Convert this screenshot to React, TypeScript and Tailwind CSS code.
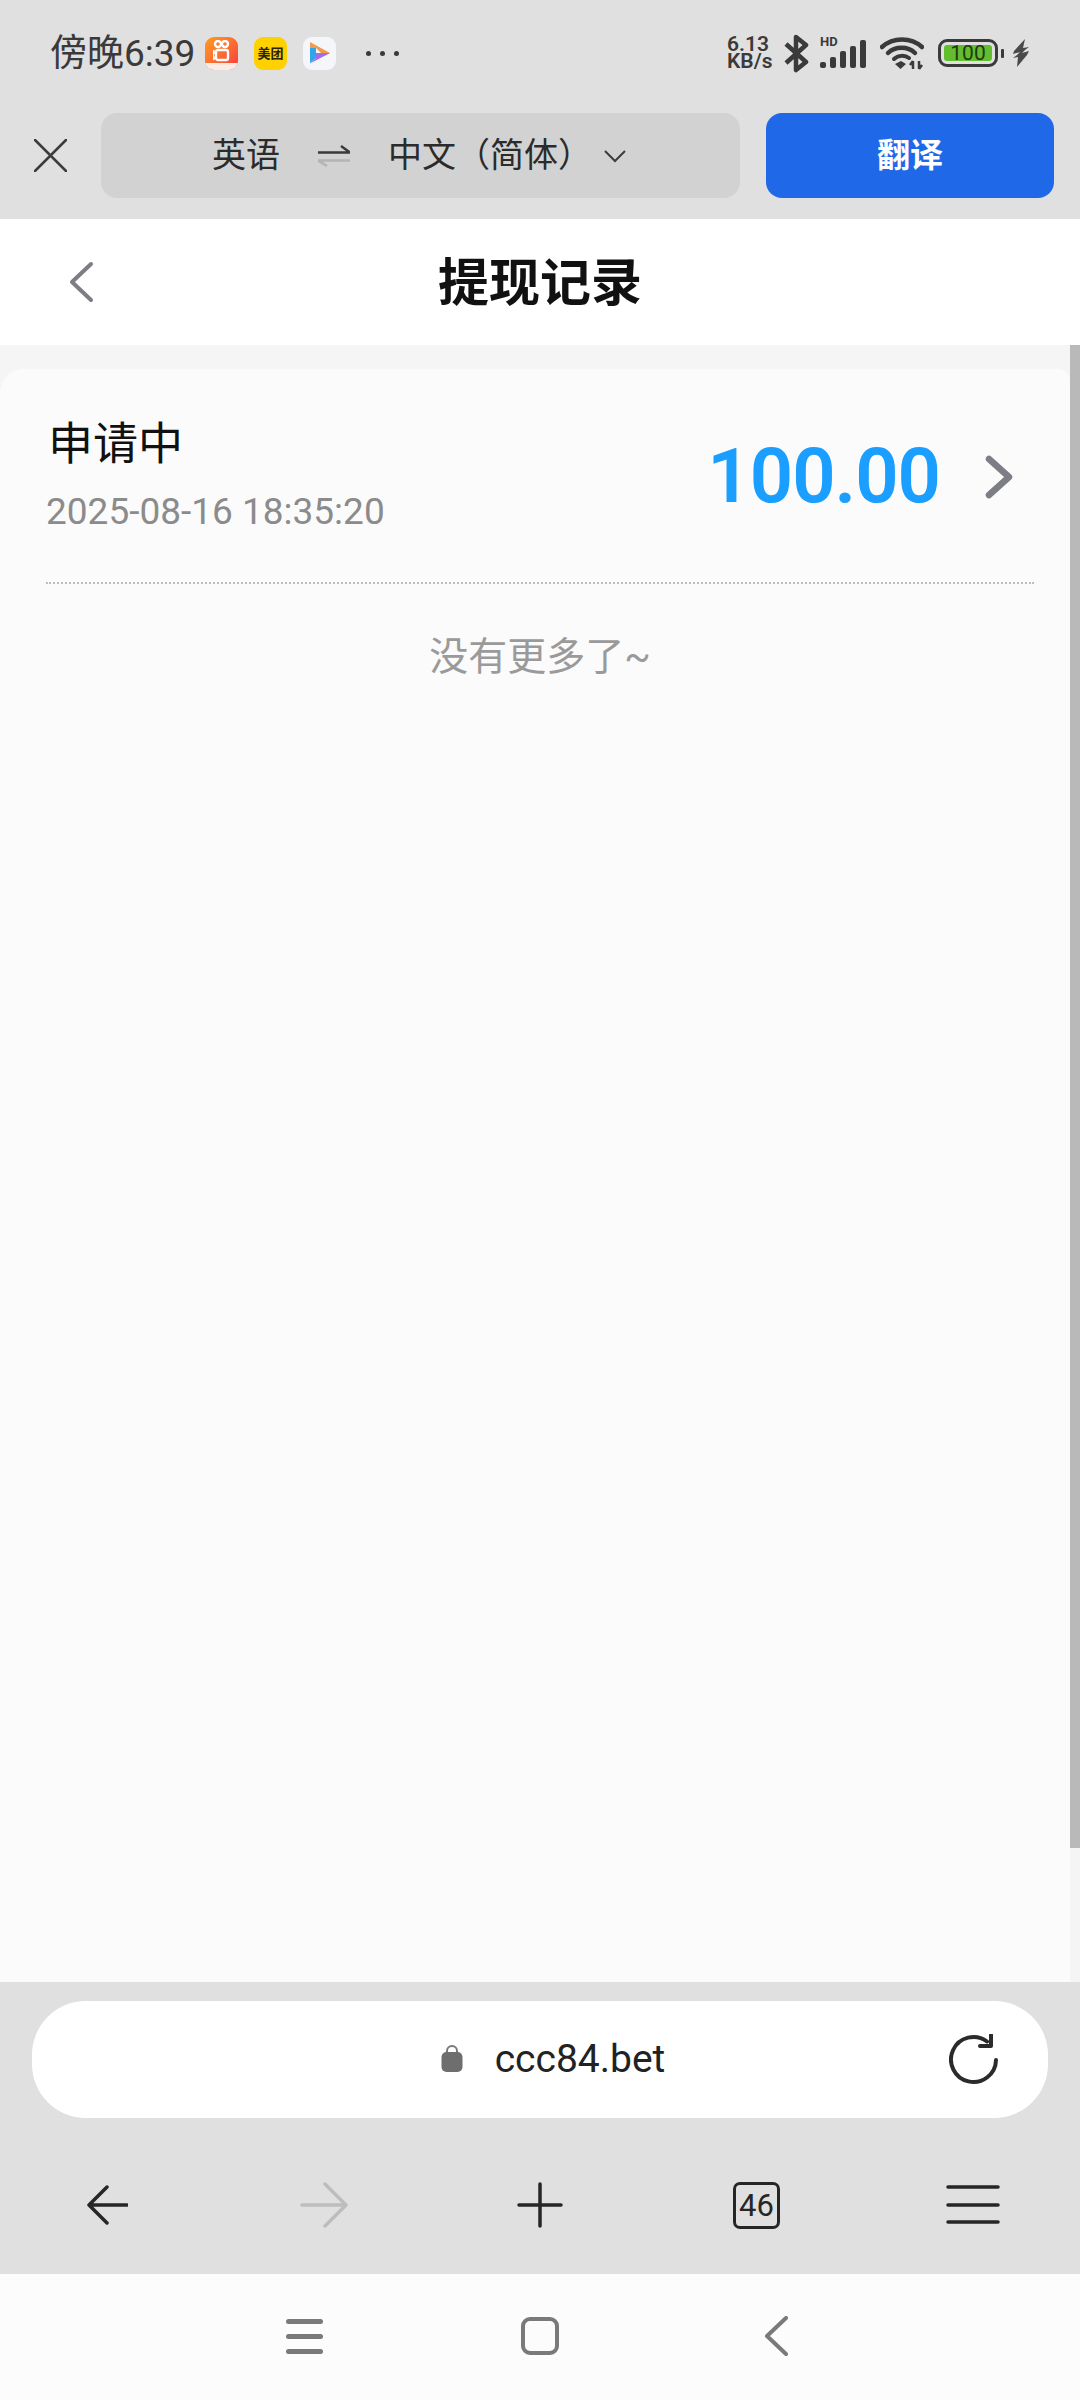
import React from "react";

const font = "font-['Roboto','Noto_Sans_CJK_SC',sans-serif]";

const StatusIcons = () => (
  <div className="flex items-center">
    <div className="font-semibold text-[#3a3a3a] text-[21px] leading-[17px] w-[47px]">
      6.13
      <br />
      KB/s
    </div>
    {/* bluetooth */}
    <svg className="ml-[10px]" width="25" height="39" viewBox="0 0 25 39" fill="none" stroke="#3a3a3a" strokeWidth="4.500" strokeLinejoin="round">
      <path d="M2 10 L22 28 L12 36 L12 3 L22 11 L2 29" />
    </svg>
    {/* HD + signal */}
    <div className="relative ml-[11px] w-[47px] h-[30px]">
      <span className="absolute left-0 top-[-3px] text-[13px] leading-[13px] font-bold text-[#3a3a3a]">HD</span>
      <div className="absolute inset-0 flex items-end gap-[4px]">
        <div className="w-[6px] h-[6px] rounded-[2px] bg-[#3a3a3a]" />
        <div className="w-[6px] h-[11px] rounded-[2px] bg-[#3a3a3a]" />
        <div className="w-[6px] h-[17px] rounded-[2px] bg-[#3a3a3a]" />
        <div className="w-[6px] h-[22px] rounded-[2px] bg-[#3a3a3a]" />
        <div className="w-[6px] h-[28px] rounded-[2px] bg-[#3a3a3a]" />
      </div>
    </div>
    {/* wifi */}
    <svg className="ml-[13px]" width="44" height="33" viewBox="0 0 44 33" fill="none">
      <path d="M2 10 C13 0 31 0 42 10" stroke="#3a3a3a" strokeWidth="4.500" strokeLinecap="round" />
      <path d="M8 16 C15 9 28 9 35 16" stroke="#3a3a3a" strokeWidth="4.500" strokeLinecap="round" />
      <path d="M14 22 C18 18 25 18 29 21" stroke="#3a3a3a" strokeWidth="4" strokeLinecap="round" />
      <path d="M15 27 L21 24 L26 27 L20.500 32 Z" fill="#3a3a3a" />
      <path d="M33 24 V32 M33 24 L30 28 M39 24 V32 M39 32 L42 28" stroke="#3a3a3a" strokeWidth="2.500" />
    </svg>
    {/* battery */}
    <div className="ml-[14px] flex items-center">
      <div className="w-[60px] h-[28px] rounded-[9px] border-[3px] border-[#3a3a3a] p-[3px] flex">
        <div className="flex-1 rounded-[3px] bg-[#62bd2f] flex items-center justify-center text-[#1f3a10] text-[21px] leading-none">
          100
        </div>
      </div>
      <div className="ml-[3px] w-[3px] h-[9px] rounded-[1px] bg-[#3a3a3a]" />
    </div>
    <svg className="ml-[9px]" width="16" height="28" viewBox="0 0 16 28" fill="#4a4a4a">
      <path d="M12 0 L1 12 L0 15 L7 13 L4 16 L0 19 L5 18 L4 28 L14 16 L16 12 L9 14 L12 11 L16 8 L10 9 Z" />
    </svg>
  </div>
);

const KuaishouLogo = () => (
  <div className="relative w-[33px] h-[33px] rounded-[9px] overflow-hidden bg-linear-to-br from-[#ff9a1f] to-[#f5323c]">
    <svg className="absolute left-[8px] top-[3px]" width="17" height="22" viewBox="0 0 17 22" fill="none" stroke="#fff" strokeWidth="2.400">
      <circle cx="5" cy="4" r="3" />
      <circle cx="12" cy="4" r="3" />
      <rect x="3" y="10" width="12" height="10" rx="2" />
      <path d="M3 13 L0 11 V19 L3 17" />
    </svg>
    <div className="absolute bottom-0 inset-x-0 h-[7px] bg-[#fdeae2]" />
  </div>
);

const MeituanLogo = () => (
  <div className="w-[33px] h-[33px] rounded-[9px] bg-[#ffd100] flex items-center justify-center text-[13px] leading-none font-bold text-[#2b2200]">
    美团
  </div>
);

const PlayLogo = () => (
  <div className="w-[33px] h-[33px] rounded-[9px] bg-[#f5f6fa] flex items-center justify-center">
    <svg width="20" height="22" viewBox="0 0 20 22">
      <path d="M0 0 L20 11 L14 14 L6 6 H0 Z" fill="#f2994a" />
      <path d="M0 6 H6 V16 L0 21 Z" fill="#2ea6e8" />
      <path d="M6 11 L20 11 L0 21.500 L6 16 Z" fill="#a46bea" />
    </svg>
  </div>
);

const ToolIcon = ({ children }: { children: React.ReactNode }) => (
  <div className="w-[60px] h-[60px] flex items-center justify-center">{children}</div>
);

export default function App() {
  return (
    <div className={`${font} relative w-[1080px] h-[2400px] flex flex-col bg-white overflow-hidden`}>
      {/* system bar + translate bar */}
      <div className="h-[219px] bg-[#e0e0e0] flex flex-col">
        <div className="h-[113px] pl-[50px] pr-[51px] pb-[7px] flex items-center justify-between">
          <div className="flex items-center">
            <span className="text-[37px] leading-none text-[#3a3a3a] w-[155px]">傍晚6:39</span>
            <div className="flex items-center gap-[16px]">
              <KuaishouLogo />
              <MeituanLogo />
              <PlayLogo />
            </div>
            <div className="ml-[30px] flex gap-[9px]">
              <div className="w-[5px] h-[5px] rounded-full bg-[#3a3a3a]" />
              <div className="w-[5px] h-[5px] rounded-full bg-[#3a3a3a]" />
              <div className="w-[5px] h-[5px] rounded-full bg-[#3a3a3a]" />
            </div>
          </div>
          <StatusIcons />
        </div>
        <div className="h-[85px] pl-[34px] pr-[26px] flex items-center">
          <svg width="33" height="33" viewBox="0 0 33 33" stroke="#3c3c3c" strokeWidth="2.500" strokeLinecap="round">
            <path d="M1 1 L32 32 M32 1 L1 32" />
          </svg>
          <div className="ml-[34px] w-[639px] h-full rounded-[16px] bg-[#d2d2d2] flex items-center justify-center pr-[3px] text-[34px] text-[#2b2b2b]">
            <span>英语</span>
            <svg className="mx-[38px]" width="32" height="26" viewBox="0 0 32 26" fill="none" strokeWidth="2.500">
              <path d="M0 9.500 H32 L23 3" stroke="#3a3a3a" />
              <path d="M32 17.500 H0 L9 23" stroke="#b4b4b4" />
            </svg>
            <span>中文（简体）</span>
            <svg className="ml-[12px]" width="22" height="14" viewBox="0 0 22 14" fill="none" stroke="#3c3c3c" strokeWidth="2">
              <path d="M1 2 L11 12 L21 2" />
            </svg>
          </div>
          <div className="ml-[26px] flex-1 h-full rounded-[16px] bg-[#1f69e8] flex items-center justify-center text-[33px] font-bold text-white">
            翻译
          </div>
        </div>
      </div>

      {/* page header */}
      <div className="h-[126px] bg-white grid grid-cols-[1fr_auto_1fr] items-center pl-[68px]">
        <svg width="26" height="42" viewBox="0 0 26 42" fill="none" stroke="#7d7d85" strokeWidth="4" strokeLinecap="round" strokeLinejoin="round">
          <path d="M23 3 L4 21 L23 39" />
        </svg>
        <h1 className="text-[51px] leading-none font-bold text-[#111] -ml-[68px] mt-[2px]">提现记录</h1>
        <div />
      </div>

      {/* page body */}
      <div className="relative flex-1 bg-[#f5f5f5] pt-[24px] flex flex-col">
        <div className="flex-1 mr-[10px] rounded-tl-[24px] rounded-tr-[12px] bg-[#fbfbfb] pl-[46px] pr-[36px]">
          <div className="h-[215px] flex items-center justify-between border-b-[2px] border-dotted border-[#bdbdbd] pr-[21px]">
            <div className="flex flex-col">
              <span className="text-[45px] leading-[50px] text-[#111] pl-[2px]">申请中</span>
              <span className="mt-[22px] text-[37px] leading-[40px] text-[#8b8b8b]">2025-08-16 18:35:20</span>
            </div>
            <div className="flex items-center">
              <span className="text-[76px] leading-none font-semibold tracking-[-1px] text-[#1a9eff]">100.00</span>
              <svg className="ml-[45px] mt-[3px]" width="28" height="44" viewBox="0 0 28 44" fill="none" stroke="#7d7d85" strokeWidth="6.500" strokeLinecap="round" strokeLinejoin="round">
                <path d="M4 4 L24 22 L4 40" />
              </svg>
            </div>
          </div>
          <p className="mt-[48px] text-center text-[39px] leading-[50px] text-[#9a9a9a]">没有更多了~</p>
        </div>
        <div className="absolute right-0 top-0 w-[10px] h-[1503px] bg-[#b9b9b9]" />
      </div>

      {/* browser toolbar */}
      <div className="h-[292px] bg-[#e0e0e0] pt-[19px]">
        <div className="relative mx-[32px] h-[117px] rounded-[54px] bg-white flex items-center justify-center pl-[26px] text-[39px] text-[#222]">
          <svg className="mr-[32px] mt-[-4px]" width="22" height="28" viewBox="0 0 22 28">
            <path d="M6 11 V7 a5 5 0 0 1 10 0 V11" fill="none" stroke="#777" strokeWidth="2" />
            <rect x="0.500" y="8" width="21" height="20" rx="5" fill="#6e6e6e" />
          </svg>
          <span>ccc84.bet</span>
          <svg className="absolute right-[47px]" width="52" height="52" viewBox="0 0 52 52" fill="none" stroke="#2b2b2b" strokeWidth="4" strokeLinecap="round">
            <path d="M47 26 A22.500 22.500 0 1 1 38 7.500" />
            <path d="M42 1 V12 H31" strokeLinejoin="round" />
          </svg>
        </div>
        <div className="mt-[57px] px-[77px] flex items-center justify-between">
          <ToolIcon>
            <svg width="42" height="42" viewBox="0 0 42 42" fill="none" stroke="#262626" strokeWidth="3.500" strokeLinecap="round" strokeLinejoin="round">
              <path d="M41 21 H3 M21 3 L3 21 L21 39" />
            </svg>
          </ToolIcon>
          <ToolIcon>
            <svg width="48" height="46" viewBox="0 0 48 46" fill="none" stroke="#bdbdbd" strokeWidth="3.500" strokeLinecap="round" strokeLinejoin="round">
              <path d="M2 23 H46 M25 2 L46 23 L25 44" />
            </svg>
          </ToolIcon>
          <ToolIcon>
            <svg width="46" height="46" viewBox="0 0 46 46" stroke="#262626" strokeWidth="3.500" strokeLinecap="round">
              <path d="M2 23 H44 M23 2 V44" />
            </svg>
          </ToolIcon>
          <ToolIcon>
            <div className="w-[47px] h-[47px] rounded-[7px] border-[3.5px] border-[#262626] flex items-center justify-center text-[31px] leading-none text-[#262626]">
              46
            </div>
          </ToolIcon>
          <ToolIcon>
            <svg width="54" height="42" viewBox="0 0 54 42" stroke="#262626" strokeWidth="3.500" strokeLinecap="round">
              <path d="M2 3 H52 M2 21 H52 M2 38 H52" />
            </svg>
          </ToolIcon>
        </div>
      </div>

      {/* android nav */}
      <div className="h-[126px] bg-[#fcfcfc] pl-[286px] pb-[2px] flex items-center">
        <div className="flex flex-col gap-[10px]">
          <div className="w-[37px] h-[5px] rounded-full bg-[#7a7a7a]" />
          <div className="w-[37px] h-[5px] rounded-full bg-[#7a7a7a]" />
          <div className="w-[37px] h-[5px] rounded-full bg-[#7a7a7a]" />
        </div>
        <div className="ml-[198px] w-[38px] h-[38px] rounded-[9px] border-[4px] border-[#7a7a7a]" />
        <svg className="ml-[205px]" width="24" height="40" viewBox="0 0 24 40" fill="none" stroke="#7a7a7a" strokeWidth="4" strokeLinecap="round" strokeLinejoin="round">
          <path d="M22 2 L3 20 L22 38" />
        </svg>
      </div>
    </div>
  );
}
